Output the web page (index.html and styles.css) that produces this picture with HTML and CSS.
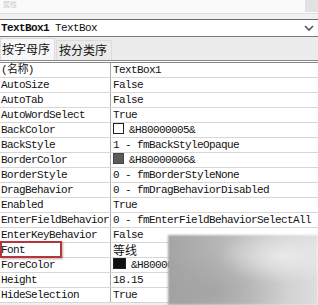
FILE: index.html
```html
<!DOCTYPE html>
<html lang="zh">
<head>
    <meta charset="UTF-8">
    <title>属性 - TextBox1</title>
    <link rel="stylesheet" href="styles.css">
</head>
<body>
    <div class="top-bar">
        <span class="caption">属性</span>
        <span class="corner"></span>
    </div>

    <div class="combo">
        <span class="obj-name">TextBox1</span>
        <span class="obj-type">TextBox</span>
        <svg class="arrow" width="10" height="7" viewBox="0 0 10 7">
            <path d="M1 1 L5 5 L9 1" fill="none" stroke="#555" stroke-width="1.6"/>
        </svg>
    </div>

    <div class="tabs">
        <span class="tab active">按字母序</span>
        <span class="tab">按分类序</span>
    </div>

    <table class="grid">
        <tr><td>(名称)</td><td>TextBox1</td></tr>
        <tr><td>AutoSize</td><td>False</td></tr>
        <tr><td>AutoTab</td><td>False</td></tr>
        <tr><td>AutoWordSelect</td><td>True</td></tr>
        <tr><td>BackColor</td><td><span class="swatch white"></span>&amp;H80000005&amp;</td></tr>
        <tr><td>BackStyle</td><td>1 - fmBackStyleOpaque</td></tr>
        <tr><td>BorderColor</td><td><span class="swatch grey"></span>&amp;H80000006&amp;</td></tr>
        <tr><td>BorderStyle</td><td>0 - fmBorderStyleNone</td></tr>
        <tr><td>DragBehavior</td><td>0 - fmDragBehaviorDisabled</td></tr>
        <tr><td>Enabled</td><td>True</td></tr>
        <tr><td>EnterFieldBehavior</td><td>0 - fmEnterFieldBehaviorSelectAll</td></tr>
        <tr><td>EnterKeyBehavior</td><td>False</td></tr>
        <tr><td class="marked">Font</td><td class="cjk">等线</td></tr>
        <tr><td>ForeColor</td><td><span class="swatch black"></span>&amp;H80000008&amp;</td></tr>
        <tr><td>Height</td><td>18.15</td></tr>
        <tr><td>HideSelection</td><td>True</td></tr>
    </table>

    <!-- watermark blur in the bottom right corner -->
    <div class="smudge"></div>
</body>
</html>
```

FILE: styles.css
```css
body {
    margin: 0;
    width: 318px;
    height: 305px;
    overflow: hidden;
    background-color: #f0f0f0;
    font-family: "Liberation Mono", "Noto Sans CJK SC", monospace;
    font-size: 11px;
    letter-spacing: -0.6px;
    color: #111;
    position: relative;
}

.top-bar {
    height: 13px;
    background-color: #fafafa;
    border-bottom: 1px solid #dedede;
    display: flex;
    justify-content: space-between;
}

.caption {
    font-family: "Noto Sans CJK SC", sans-serif;
    font-size: 7px;
    letter-spacing: 0;
    color: #cacaca;
    line-height: 9px;
    padding-left: 3px;
}

.corner {
    width: 13px;
    height: 12px;
    background-color: #e2e2e2;
}

.combo {
    margin-top: 5px;
    height: 16px;
    background-color: #fff;
    border-top: 1px solid #6a6a6a;
    border-bottom: 1px solid #7a7a7a;
    display: flex;
    align-items: center;
    gap: 6px;
    padding-left: 1px;
}

.obj-name {
    font-weight: bold;
}

.arrow {
    margin-left: auto;
    margin-right: 4px;
}

.tabs {
    height: 23px;
    display: flex;
    align-items: flex-end;
    background-color: #ececec;
}

.tab {
    font-family: "Noto Sans CJK SC", sans-serif;
    font-size: 12px;
    letter-spacing: 0;
    color: #111;
    height: 19px;
    line-height: 18px;
    padding: 0 4px 0 2px;
    border: 1px solid #dcdcdc;
    border-bottom: none;
    background-color: #eaeaea;
    margin-left: 1px;
}

.tab.active {
    background-color: #f7f7f7;
    height: 21px;
    line-height: 19px;
    margin-left: 0;
    padding-left: 1px;
}

.grid {
    width: 100%;
    border-collapse: collapse;
    background-color: #fff;
    border-top: 3px double #8a8a8a;
    table-layout: fixed;
}

.grid td {
    height: 14px;
    padding: 0 0 0 2px;
    border-bottom: 1px solid #d6d6d6;
    white-space: nowrap;
    overflow: hidden;
    line-height: 14px;
}

.grid td:first-child {
    width: 109px;
    padding-left: 1px;
    overflow: visible;
    border-right: 1px solid #a8a8a8;
}

.grid td.cjk {
    font-family: "Noto Sans CJK SC", sans-serif;
    font-size: 12px;
    letter-spacing: 0;
}

.grid td.marked {
    position: relative;
}

.grid td.marked::after {
    content: "";
    position: absolute;
    left: 0;
    top: -2px;
    width: 58px;
    height: 13px;
    border: 2px solid #b5363a;
    box-shadow: 1px 1px 2px rgba(120, 40, 40, 0.4);
}

.swatch {
    display: inline-block;
    width: 9px;
    height: 9px;
    margin-right: 5px;
    vertical-align: -1px;
    border: 1px solid #222;
}

.swatch.white {
    background-color: #fff;
}

.swatch.grey {
    background-color: #5a5a5a;
    border-color: #444;
}

.swatch.black {
    background-color: #111;
    width: 11px;
}

.smudge {
    position: absolute;
    left: 168px;
    top: 235px;
    width: 150px;
    height: 70px;
    background:
        radial-gradient(ellipse at 75% 30%, rgba(255, 255, 255, 0.55), rgba(255, 255, 255, 0) 40%),
        radial-gradient(ellipse at 30% 80%, rgba(150, 150, 150, 0.5), rgba(150, 150, 150, 0) 50%),
        linear-gradient(90deg, #a4a4a4 0%, #b4b4b4 30%, #c6c6c6 60%, #dedede 100%);
    filter: blur(1px);
}
```
